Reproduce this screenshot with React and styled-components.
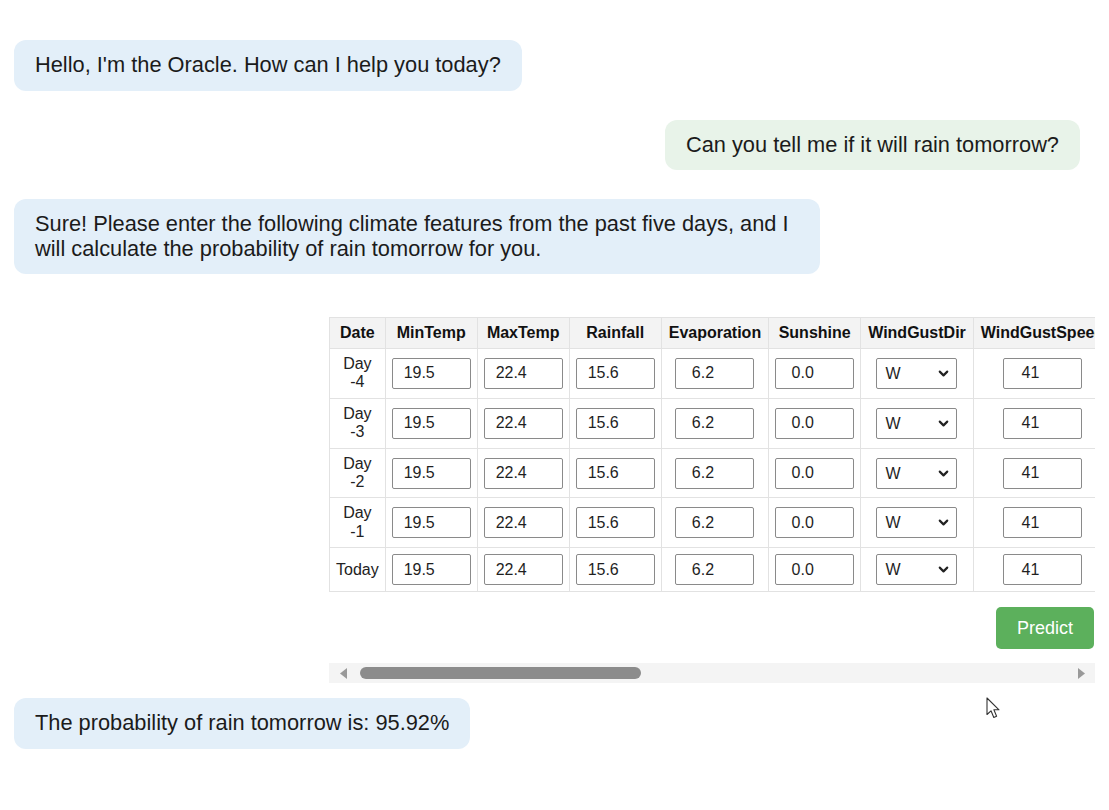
import React, { useLayoutEffect, useRef, useState } from "react";
import styled, { createGlobalStyle } from "styled-components";
import { ChevronDown } from "lucide-react";

const GlobalStyle = createGlobalStyle`
  body {
    margin: 0;
    background: #ffffff;
    font-family: "Liberation Sans", Arial, sans-serif;
    color: #1b1b1b;
  }
`;

const days = ["Day -4", "Day -3", "Day -2", "Day -1", "Today"];

// value = input, dir = select
const columns = [
  { name: "MinTemp", value: "19.5" },
  { name: "MaxTemp", value: "22.4" },
  { name: "Rainfall", value: "15.6" },
  { name: "Evaporation", value: "6.2" },
  { name: "Sunshine", value: "0.0" },
  { name: "WindGustDir", dir: "W" },
  { name: "WindGustSpeed", value: "41" },
  { name: "WindDir9am", dir: "W" },
  { name: "WindDir3pm", dir: "WNW" },
  { name: "WindSpeed9am", value: "20" },
  { name: "WindSpeed3pm", value: "24" },
  { name: "Humidity9am", value: "71" },
  { name: "Humidity3pm", value: "22" },
  { name: "Pressure9am", value: "1007.7" },
  { name: "Pressure3pm", value: "1007.1" },
  { name: "Cloud9am", value: "8" },
  { name: "Cloud3pm", value: "7" },
];

const directions = ["N", "NNE", "NE", "ENE", "E", "ESE", "SE", "SSE", "S", "SSW", "SW", "WSW", "W", "WNW", "NW", "NNW"];

// custom scrollbar so the bar is always drawn
const ScrollArea = ({ children }) => {
  const ref = useRef(null);
  const [bar, setBar] = useState({ size: 0.39, pos: 0 });

  const update = () => {
    const el = ref.current;
    if (!el) return;
    setBar({ size: el.clientWidth / el.scrollWidth, pos: el.scrollLeft / el.scrollWidth });
  };

  useLayoutEffect(() => {
    update();
  }, []);

  const step = (d) => ref.current && ref.current.scrollBy({ left: d });

  return (
    <>
      <Scroller ref={ref} onScroll={update}>
        {children}
      </Scroller>
      <ScrollTrack>
        <ArrowButton onClick={() => step(-60)}>
          <svg width="7" height="11" viewBox="0 0 7 11">
            <polygon points="7,0 7,11 0,5.5" fill="#999" />
          </svg>
        </ArrowButton>
        <Rail>
          <Thumb style={{ left: `${bar.pos * 100}%`, width: `${bar.size * 100}%` }} />
        </Rail>
        <ArrowButton onClick={() => step(60)}>
          <svg width="7" height="11" viewBox="0 0 7 11">
            <polygon points="0,0 0,11 7,5.5" fill="#999" />
          </svg>
        </ArrowButton>
      </ScrollTrack>
    </>
  );
};

const App = () => {
  return (
    <>
      <GlobalStyle />
      <Chat>
        <Bubble>Hello, I'm the Oracle. How can I help you today?</Bubble>
        <Bubble $user>Can you tell me if it will rain tomorrow?</Bubble>
        <Bubble>
          Sure! Please enter the following climate features from the past five days, and I will
          calculate the probability of rain tomorrow for you.
        </Bubble>

        <FormPanel>
          <ScrollArea>
            <Table>
              <thead>
                <tr>
                  <th>Date</th>
                  {columns.map((c) => (
                    <th key={c.name}>{c.name}</th>
                  ))}
                </tr>
              </thead>
              <tbody>
                {days.map((d) => (
                  <tr key={d}>
                    <td>{d}</td>
                    {columns.map((c) => (
                      <td key={c.name}>
                        {c.dir ? (
                          <SelectWrap>
                            <DirSelect defaultValue={c.dir}>
                              {directions.map((x) => (
                                <option key={x}>{x}</option>
                              ))}
                            </DirSelect>
                            <ChevronDown size={15} strokeWidth={3.4} />
                          </SelectWrap>
                        ) : (
                          <NumInput defaultValue={c.value} />
                        )}
                      </td>
                    ))}
                  </tr>
                ))}
              </tbody>
            </Table>
            <Actions>
              <PredictButton>Predict</PredictButton>
            </Actions>
          </ScrollArea>
        </FormPanel>

        <Bubble>The probability of rain tomorrow is: 95.92%</Bubble>
      </Chat>

      <Pointer width="16" height="24" viewBox="0 0 16 24">
        <path
          d="M1 1 L1 17.5 L5 13.8 L7.8 20.5 L10.6 19.3 L7.9 12.8 L13 12.8 Z"
          fill="#fff"
          stroke="#333"
          strokeWidth="1.1"
          strokeLinejoin="round"
        />
      </Pointer>
    </>
  );
};

export default App;

const Chat = styled.div`
  display: flex;
  flex-direction: column;
  padding: 40px 14px 40px;
`;

const Bubble = styled.div`
  align-self: ${(p) => (p.$user ? "flex-end" : "flex-start")};
  max-width: 806px;
  box-sizing: border-box;
  margin: 0 ${(p) => (p.$user ? "15px" : "0")} 29px 0;
  padding: 13px 21px;
  border-radius: 12px;
  background: ${(p) => (p.$user ? "#e8f3e9" : "#e3eff9")};
  font-size: 21.8px;
  line-height: 24.5px;
  color: #1b1b1b;
`;

const FormPanel = styled.div`
  align-self: flex-end;
  width: 766px;
  margin: 14px 0 15px;
`;

const Scroller = styled.div`
  overflow-x: auto;
  scrollbar-width: none;

  &::-webkit-scrollbar {
    display: none;
  }
`;

const ScrollTrack = styled.div`
  display: flex;
  align-items: stretch;
  height: 20px;
  background: #f4f4f4;
`;

const ArrowButton = styled.button`
  width: 28px;
  padding: 0;
  border: none;
  background: transparent;
  display: flex;
  align-items: center;
  justify-content: center;
  cursor: default;
`;

const Rail = styled.div`
  position: relative;
  flex: 1;
  margin: 0 3px;
`;

const Thumb = styled.div`
  position: absolute;
  top: 4px;
  height: 12px;
  border-radius: 6px;
  background: #8c8c8c;
`;

const Table = styled.table`
  border-collapse: collapse;
  font-size: 16px;
  color: #222;

  th,
  td {
    border: 1px solid #e2e2e2;
    text-align: center;
    vertical-align: middle;
  }

  th {
    background: #f3f3f3;
    font-weight: bold;
    color: #111;
    padding: 6px 7px;
    white-space: nowrap;
  }

  td {
    padding: 6px;
    line-height: 18.4px;
  }
`;

const NumInput = styled.input`
  box-sizing: border-box;
  width: 79px;
  height: 31px;
  padding: 0 24px 0 0;
  border: 1px solid #8a8a8a;
  border-radius: 2px;
  font-family: "Liberation Sans", Arial, sans-serif;
  font-size: 16px;
  color: #1f1f1f;
  text-align: center;
  background: #fff;
  display: inline-block;
  vertical-align: middle;
`;

const SelectWrap = styled.div`
  position: relative;
  display: inline-block;
  vertical-align: middle;

  svg {
    position: absolute;
    right: 6px;
    top: 8px;
    color: #222;
    pointer-events: none;
  }
`;

const DirSelect = styled.select`
  appearance: none;
  box-sizing: border-box;
  width: 81px;
  height: 31px;
  padding: 0 0 0 8px;
  border: 1px solid #8a8a8a;
  border-radius: 2px;
  background: #fff;
  font-family: "Liberation Sans", Arial, sans-serif;
  font-size: 16px;
  color: #1f1f1f;
  display: block;
`;

const Actions = styled.div`
  width: 766px;
  position: sticky;
  left: 0;
  display: flex;
  justify-content: flex-end;
  padding: 15px 1px 14px 0;
  box-sizing: border-box;
`;

const PredictButton = styled.button`
  height: 42px;
  padding: 0 21px;
  border: none;
  border-radius: 5px;
  background: #5cb05c;
  color: #fff;
  font-family: "Liberation Sans", Arial, sans-serif;
  font-size: 18px;
  cursor: pointer;
`;

const Pointer = styled.svg`
  position: fixed;
  left: 986px;
  top: 697px;
  pointer-events: none;
`;
